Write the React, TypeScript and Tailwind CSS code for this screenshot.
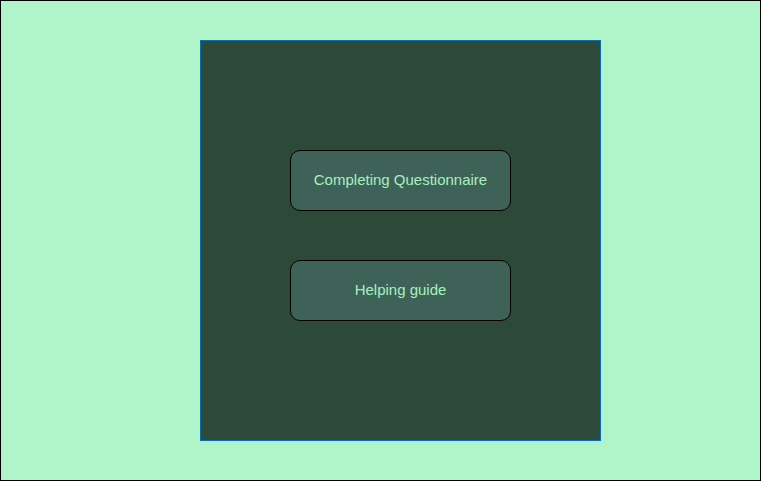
export default function App() {
  return (
    <div className="w-[761px] h-[481px] border border-black bg-[#b0f5c9] pt-[39px] pl-[199px] font-['Liberation_Sans',Arial,sans-serif]">
      <div className="w-[401px] h-[401px] border border-[#0a6cb5] bg-[#2c4a37] flex flex-col items-center pt-[109px] gap-[49px]">
        <button className="w-[221px] h-[61px] rounded-[10px] border border-black bg-[#3e6158] text-[15px] text-[#a8f0c0]">
          Completing Questionnaire
        </button>
        <button className="w-[221px] h-[61px] rounded-[10px] border border-black bg-[#3e6158] text-[15px] text-[#a8f0c0]">
          Helping guide
        </button>
      </div>
    </div>
  );
}
